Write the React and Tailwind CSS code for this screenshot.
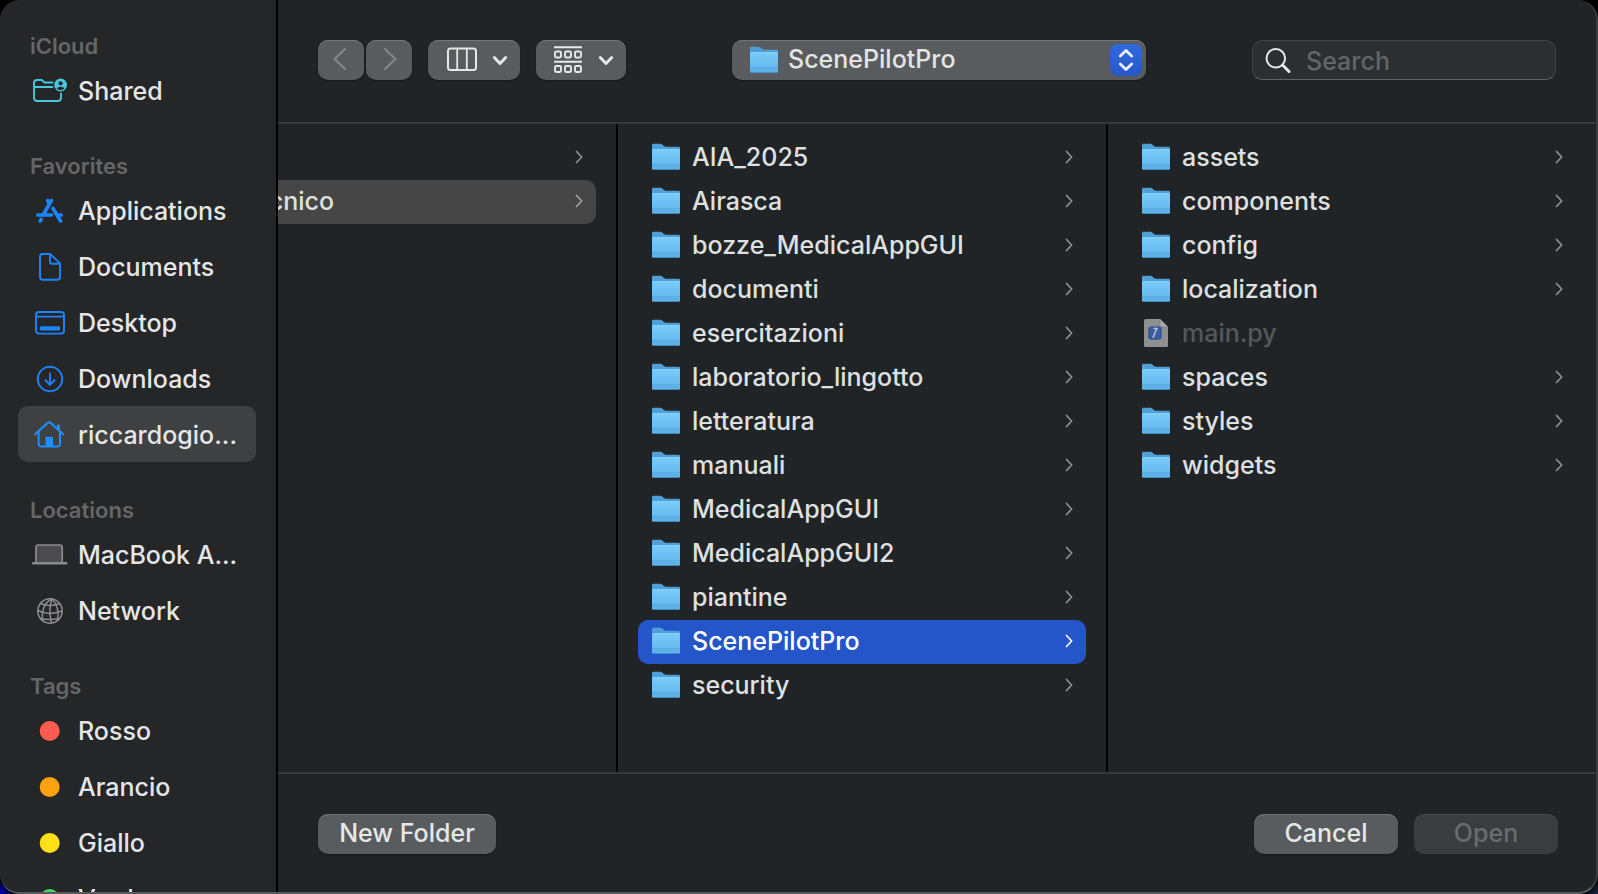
import React from "react";

const stroke = { fill: "none", stroke: "currentColor", strokeLinecap: "round", strokeLinejoin: "round" };

function FolderIcon() {
  return (
    <svg width="28" height="28" viewBox="0 0 28 28" className="shrink-0" aria-hidden="true">
      <defs>
        <linearGradient id="folderFront" x1="0" y1="0" x2="0" y2="1">
          <stop offset="0" stopColor="#7bcbf8" />
          <stop offset="1" stopColor="#5fb4ea" />
        </linearGradient>
      </defs>
      <path d="M0 2.2Q0 .8 1.4.8H8.4Q9.6.8 10.6 1.8L12 3Q12.8 3.7 14 3.7H26.7Q28 3.7 28 5V12H0Z" fill="#4f9fd6" />
      <path d="M0 7.4Q0 6.2 1.2 6.2H26.8Q28 6.2 28 7.4V25.4Q28 26.8 26.6 26.8H1.4Q0 26.8 0 25.4Z" fill="url(#folderFront)" />
      <path d="M.6 6.6H27.4" stroke="#8ed5fb" strokeWidth=".8" />
      <path d="M0 21.6H28M0 23.6H28" stroke="#4fa3db" strokeWidth=".7" />
      <path d="M.8 26.4H27.2" stroke="#3f8cc4" strokeWidth=".9" />
    </svg>
  );
}

function PythonFileIcon() {
  return (
    <svg width="28" height="28" viewBox="0 0 28 28" className="shrink-0" aria-hidden="true">
      <path d="M2 1.500Q2 0 3.500 0H18L26 8V26.500Q26 28 24.500 28H3.500Q2 28 2 26.500Z" fill="#8f8f90" />
      <path d="M18 0V6.500Q18 8 19.500 8H26Z" fill="#a9a9aa" />
      <path d="M18 0V6.500Q18 8 19.500 8H26" fill="none" stroke="#77787a" strokeWidth=".6" />
      <rect x="6.200" y="7.200" width="13.600" height="13.600" rx="3" fill="#3a5ea6" />
      <rect x="7.600" y="8.600" width="10.800" height="10.800" rx="2" fill="none" stroke="#2c4a8c" strokeWidth=".7" />
      <path d="M11 19L14.500 9.500" stroke="#b9bcc4" strokeWidth="1.600" />
      <path d="M11.500 9.800Q13 8.600 16 9.800" fill="none" stroke="#b9bcc4" strokeWidth="1.400" />
    </svg>
  );
}

function RowChevron() {
  return (
    <svg width="8" height="14" viewBox="0 0 8 14" className="shrink-0" aria-hidden="true">
      <path d="M1.500 1.500L6.700 7L1.500 12.500" {...stroke} strokeWidth="1.700" />
    </svg>
  );
}

function ChevronDown() {
  return (
    <svg width="16" height="12" viewBox="0 0 16 12" aria-hidden="true">
      <path d="M2.300 3.500L8 9.500L13.700 3.500" {...stroke} strokeWidth="3" />
    </svg>
  );
}

function SidebarIcon({ children, className }) {
  return (
    <svg width="36" height="32" viewBox="0 0 36 32" className={"shrink-0 " + className} aria-hidden="true">
      {children}
    </svg>
  );
}

const SharedIcon = () => (
  <SidebarIcon className="text-[#45c8dc]">
    <g {...stroke} strokeWidth="1.900">
      <path d="M20.500 7.500H12.600L10.700 5.700Q10 5 9 5H5.200Q2 5 2 8.200V22.800Q2 26 5.200 26H25.800Q29 26 29 22.800V18.500" />
      <path d="M2 12H20.500" />
    </g>
    <circle cx="28.600" cy="10" r="6.400" fill="currentColor" />
    <circle cx="28.600" cy="8.300" r="2.100" fill="#252628" />
    <path d="M24.800 13.400Q25.600 11.700 28.600 11.700T32.400 13.400Q31 15 28.600 15T24.800 13.400Z" fill="#252628" />
  </SidebarIcon>
);

const ApplicationsIcon = () => (
  <SidebarIcon className="text-[#1b84ff]">
    <g {...stroke} strokeWidth="3.600">
      <path d="M19.400 5.500L12 18.500" />
      <path d="M15.600 5.500L17.300 8.500" />
      <path d="M21 13.500L28.600 26" />
      <path d="M5.800 20H19.500" />
      <path d="M26.500 20H29.300" />
      <path d="M9.200 24.500L8.200 26.200" />
    </g>
  </SidebarIcon>
);

const DocumentsIcon = () => (
  <SidebarIcon className="text-[#1b84ff]">
    <g {...stroke} strokeWidth="1.900">
      <path d="M10.300 3H18.300L28 12.400V25.800Q28 28.800 25 28.800H11Q8 28.800 8 25.800V6Q8 3 10.300 3Z" />
      <path d="M18 3.200V10.400Q18 12.800 20.400 12.800H27.800" />
    </g>
  </SidebarIcon>
);

const DesktopIcon = () => (
  <SidebarIcon className="text-[#1b84ff]">
    <rect x="4" y="5" width="28" height="21.600" rx="3" {...stroke} strokeWidth="1.900" />
    <path d="M4 9.600H32" {...stroke} strokeWidth="1.700" />
    <rect x="8" y="19.300" width="20" height="4.200" rx="1" fill="currentColor" />
  </SidebarIcon>
);

const DownloadsIcon = () => (
  <SidebarIcon className="text-[#1b84ff]">
    <circle cx="18" cy="16" r="12.200" {...stroke} strokeWidth="1.900" />
    <path d="M18 10.400V21.600M13.400 17.300L18 21.800L22.600 17.300" {...stroke} strokeWidth="1.900" />
  </SidebarIcon>
);

const HomeIcon = () => (
  <SidebarIcon className="text-[#1f8fff]">
    <path d="M3 15.200L15.800 3.900Q17.200 2.700 18.600 3.900L31.200 15.200" {...stroke} strokeWidth="2.100" />
    <path d="M6.600 13.100V24.600Q6.600 27.600 9.600 27.600H25Q28 27.600 28 24.600V13.100" {...stroke} strokeWidth="2" />
    <path d="M24.800 5.800H28V12.600L24.800 9.800Z" fill="currentColor" />
    <path d="M13.600 27.600V18.800Q13.600 17.800 14.600 17.800H20Q21 17.800 21 18.800V27.600Z" fill="currentColor" />
  </SidebarIcon>
);

const LaptopIcon = () => (
  <SidebarIcon className="text-[#8c8c8e]">
    <path d="M4 24V8.400Q4 6 6.400 6H27.800Q30.200 6 30.200 8.400V24Z" fill="#4b4b4d" stroke="currentColor" strokeWidth="1.700" />
    <rect x="0" y="23" width="35.400" height="2.600" rx="1.200" fill="currentColor" />
  </SidebarIcon>
);

const NetworkIcon = () => (
  <SidebarIcon className="text-[#8c8c8e]">
    <g {...stroke} strokeWidth="1.500">
      <circle cx="18" cy="16" r="12.200" />
      <path d="M20 4Q9 9 10.500 25.500" />
      <path d="M20 4Q16 14 19.500 28" />
      <path d="M20 4Q28 12 25.500 25" />
      <path d="M8.500 8.500Q17 12.500 27.800 8.800" />
      <path d="M6 15.500Q16 21 30 16" />
      <path d="M8.500 23.500Q17 25.500 27 23.500" />
    </g>
  </SidebarIcon>
);

const TagDot = ({ className }) => (
  <SidebarIcon className={className}>
    <circle cx="17.700" cy="16" r="10" fill="currentColor" />
  </SidebarIcon>
);

const sections = [
  { title: "iCloud", items: [{ name: "Shared", icon: <SharedIcon /> }] },
  {
    title: "Favorites",
    items: [
      { name: "Applications", icon: <ApplicationsIcon /> },
      { name: "Documents", icon: <DocumentsIcon /> },
      { name: "Desktop", icon: <DesktopIcon /> },
      { name: "Downloads", icon: <DownloadsIcon /> },
      { name: "riccardogio...", icon: <HomeIcon />, active: true },
    ],
  },
  {
    title: "Locations",
    items: [
      { name: "MacBook A...", icon: <LaptopIcon /> },
      { name: "Network", icon: <NetworkIcon /> },
    ],
  },
  {
    title: "Tags",
    items: [
      { name: "Rosso", icon: <TagDot className="text-[#ff5b51]" /> },
      { name: "Arancio", icon: <TagDot className="text-[#fea30f]" /> },
      { name: "Giallo", icon: <TagDot className="text-[#ffe014]" /> },
      { name: "Verde", icon: <TagDot className="text-[#3fdc5a]" /> },
    ],
  },
];

const projectFolders = [
  "AIA_2025", "Airasca", "bozze_MedicalAppGUI", "documenti", "esercitazioni", "laboratorio_lingotto",
  "letteratura", "manuali", "MedicalAppGUI", "MedicalAppGUI2", "piantine", "ScenePilotPro", "security",
];

const contents = ["assets", "components", "config", "localization", "main.py", "spaces", "styles", "widgets"];

function Sidebar() {
  return (
    <nav aria-label="Sidebar" className="flex w-[278px] shrink-0 flex-col gap-8 overflow-hidden border-r-2 border-black bg-[#252628] pt-[30px] pr-5 pl-[18px]">
      {sections.map((section) => (
        <section key={section.title} className="shrink-0">
          <h2 className="pl-3 text-[22px] leading-8 font-semibold text-[#656668]">{section.title}</h2>
          <ul>
            {section.items.map((item) => (
              <li key={item.name}>
                <a
                  href="#"
                  className={
                    "flex h-14 items-center gap-[10px] rounded-[10px] pt-[2px] pl-[14px] whitespace-nowrap text-[#e6e6e7] " +
                    (item.active ? "bg-[#3f4042]" : "")
                  }
                >
                  {item.icon}
                  {item.name}
                </a>
              </li>
            ))}
          </ul>
        </section>
      ))}
    </nav>
  );
}

function FileRow({ name, selected }) {
  const isFile = name.includes(".");
  const tone = selected ? "bg-[#2456c9] text-white" : isFile ? "text-[#55585a]" : "text-[#dfe0e0]";
  return (
    <li>
      <button type="button" disabled={isFile} className={"flex h-11 w-full items-center rounded-[10px] pr-[13px] pb-[2px] pl-[14px] text-left " + tone}>
        {isFile ? <PythonFileIcon /> : <FolderIcon />}
        <span className="flex-1 truncate pl-3">{name}</span>
        {!isFile && (
          <span className={selected ? "text-white" : "text-[#8f9193]"}>
            <RowChevron />
          </span>
        )}
      </button>
    </li>
  );
}

const control = "h-10 rounded-[10px] bg-[#595c5e] shadow-[inset_0_1px_0_#747678,0_1px_2px_#00000060]";

function Toolbar() {
  return (
    <header className="flex h-[124px] shrink-0 items-start justify-between border-b-2 border-[#36393c] pt-10 pr-10 pl-10">
      <div className="flex gap-4">
        <div className="flex gap-[2px] text-[#85888a]">
          <button type="button" aria-label="Back" className={control + " flex w-[46px] items-center justify-center pr-[2px] pb-[2px]"}>
            <svg width="14" height="24" viewBox="0 0 14 24" aria-hidden="true">
              <path d="M12 2L1.500 12L12 22" {...stroke} strokeWidth="2" />
            </svg>
          </button>
          <button type="button" aria-label="Forward" className={control + " flex w-[46px] items-center justify-center pb-[2px] pl-[2px]"}>
            <svg width="14" height="24" viewBox="0 0 14 24" aria-hidden="true">
              <path d="M2 2L12.500 12L2 22" {...stroke} strokeWidth="2" />
            </svg>
          </button>
        </div>
        <button type="button" aria-label="View as columns" className={control + " flex w-[92px] items-center justify-center gap-[14px] pl-[6px]"}>
          <svg width="32" height="26" viewBox="0 0 32 26" aria-hidden="true">
            <rect x="2" y="1.500" width="28" height="21.500" rx="2.500" {...stroke} strokeWidth="2" />
            <path d="M11.200 1.500V23M20.800 1.500V23" stroke="currentColor" strokeWidth="1.800" />
          </svg>
          <ChevronDown />
        </button>
        <button type="button" aria-label="Group items" className={control + " flex w-[90px] items-center justify-center gap-4 pl-[6px]"}>
          <svg width="28" height="28" viewBox="0 0 28 28" aria-hidden="true">
            <path d="M0 1.200H28M0 15.700H28" stroke="currentColor" strokeWidth="1.900" />
            <g {...stroke} strokeWidth="1.900">
              <rect x="1" y="5.500" width="6" height="6" rx="1.200" />
              <rect x="11" y="5.500" width="6" height="6" rx="1.200" />
              <rect x="21" y="5.500" width="6" height="6" rx="1.200" />
              <rect x="1" y="20" width="6" height="6" rx="1.200" />
              <rect x="11" y="20" width="6" height="6" rx="1.200" />
              <rect x="21" y="20" width="6" height="6" rx="1.200" />
            </g>
          </svg>
          <ChevronDown />
        </button>
      </div>

      <div className="relative w-[414px]">
        <select aria-label="Current folder" className={control + " block w-full appearance-none pb-[2px] pl-14 text-[#e3e4e4]"}>
          <option>ScenePilotPro</option>
        </select>
        <span className="pointer-events-none absolute top-[6px] left-[18px]">
          <FolderIcon />
        </span>
        <span className="pointer-events-none absolute top-1 right-1 flex size-8 items-center justify-center rounded-lg bg-linear-to-b from-[#3069dd] to-[#2558c8] text-[#e9effc]">
          <svg width="16" height="24" viewBox="0 0 16 24" aria-hidden="true">
            <path d="M2.300 8L8 2.500L13.700 8M2.300 16L8 21.500L13.700 16" {...stroke} strokeWidth="2.800" />
          </svg>
        </span>
      </div>

      <label className="flex h-10 w-[304px] items-center gap-[15px] rounded-[10px] border border-[#404345] border-b-[#606365] bg-[#2c2f31] pt-[2px] pl-3">
        <svg width="26" height="26" viewBox="0 0 26 26" className="shrink-0" aria-hidden="true">
          <circle cx="10.800" cy="10.300" r="9.300" {...stroke} strokeWidth="2" />
          <path d="M17.800 17.300L24 23.500" {...stroke} strokeWidth="3" />
        </svg>
        <input type="text" aria-label="Search" placeholder="Search" className="w-full min-w-0 bg-transparent outline-none placeholder:text-[#626567]" />
      </label>
    </header>
  );
}

export default function App() {
  return (
    <div className="h-screen bg-black bg-[radial-gradient(circle_at_bottom_left,#0000c8,transparent_14px),radial-gradient(circle_at_bottom_right,#1a2748,transparent_14px)] font-['Inter',sans-serif] text-[25px] leading-8 font-medium text-[#e6e7e7]">
      <div className="flex h-full overflow-hidden rounded-[20px] border-r-2 border-b-2 border-r-[#3a3c3e] border-b-[#57595b] bg-[#212426]">
        <Sidebar />
        <div className="flex min-w-0 flex-1 flex-col">
          <Toolbar />
          <main className="flex min-h-0 flex-1">
            <div className="w-[340px] shrink-0 overflow-hidden border-r-2 border-black pt-3 pr-5">
              <ul>
                <li>
                  <button type="button" aria-label="Folder" className="flex h-11 w-full items-center justify-end pr-[13px] pb-[2px] text-[#8f9193]">
                    <RowChevron />
                  </button>
                </li>
                <li>
                  <button type="button" className="flex h-11 w-full items-center justify-between rounded-r-[10px] bg-[#464646] pr-[13px] pb-[2px] text-[#dfe0e0]">
                    <span className="flex w-14 justify-end overflow-hidden">cnico</span>
                    <span className="text-[#a3a3a3]">
                      <RowChevron />
                    </span>
                  </button>
                </li>
              </ul>
            </div>
            <ul className="w-[490px] shrink-0 overflow-hidden border-r-2 border-black px-5 pt-3">
              {projectFolders.map((name) => (
                <FileRow key={name} name={name} selected={name === "ScenePilotPro"} />
              ))}
            </ul>
            <ul className="min-w-0 flex-1 overflow-hidden px-5 pt-3">
              {contents.map((name) => (
                <FileRow key={name} name={name} />
              ))}
            </ul>
          </main>
          <footer className="flex h-[120px] shrink-0 items-start gap-4 border-t-2 border-[#36393c] pt-10 pr-[38px] pl-10">
            <button type="button" className={control + " mr-auto w-[178px] pb-[2px]"}>New Folder</button>
            <button type="button" className={control + " w-36 pb-[2px]"}>Cancel</button>
            <button type="button" disabled className="h-10 w-36 rounded-[10px] bg-[#3a3d3f] pb-[2px] text-[#696c6e] shadow-[inset_0_1px_0_#464949]">Open</button>
          </footer>
        </div>
      </div>
    </div>
  );
}
